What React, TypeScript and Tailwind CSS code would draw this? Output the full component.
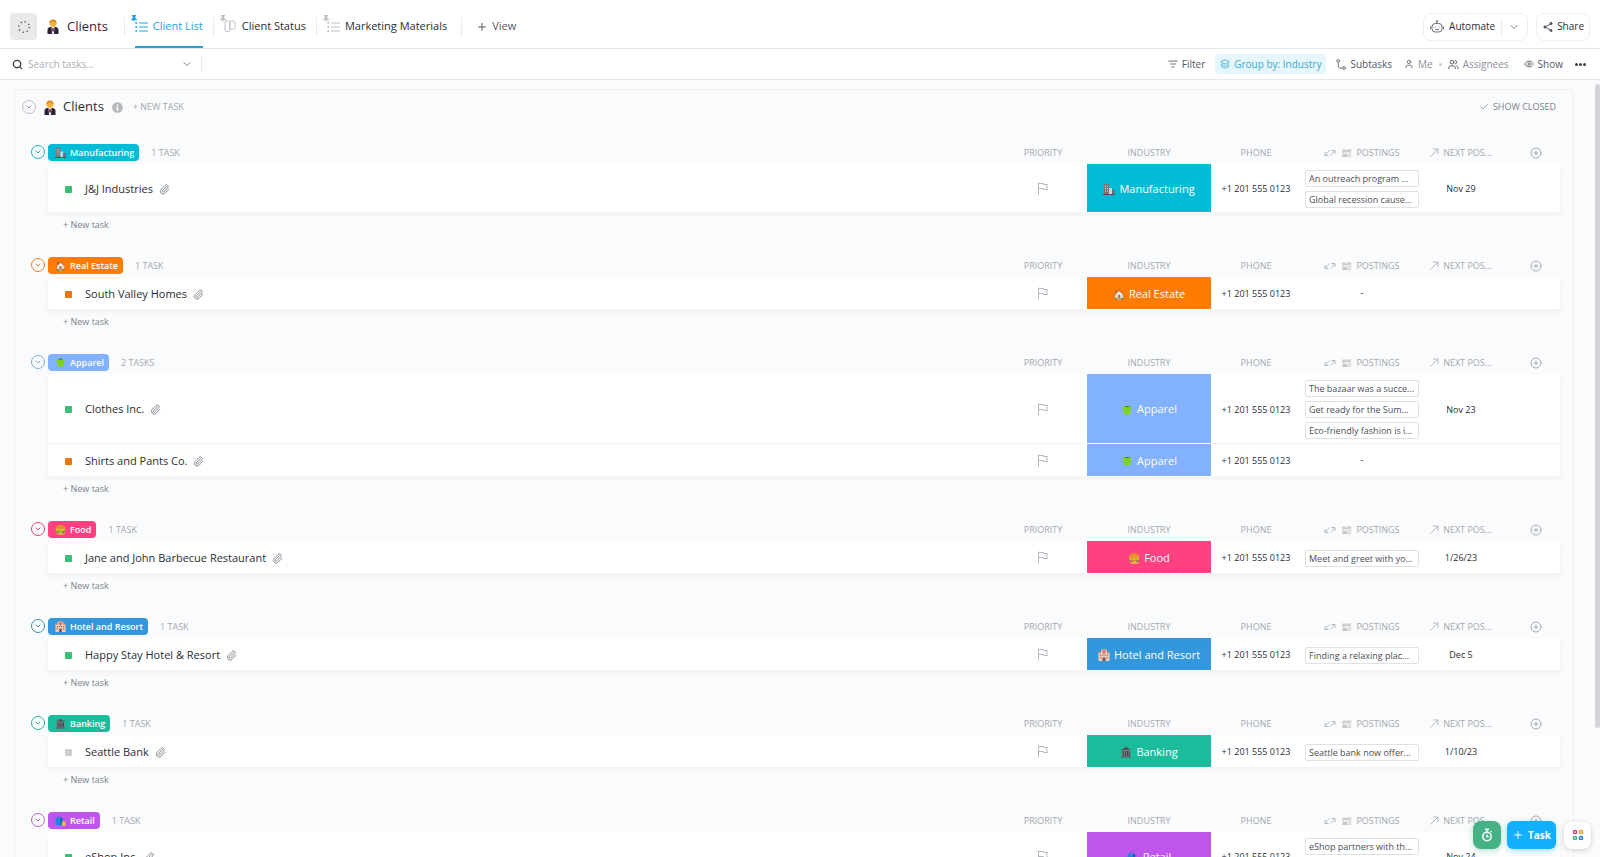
import type { ReactNode } from 'react';
import {
  Check,
  ChevronDown,
  CirclePlus,
  Eye,
  Layers,
  ListFilter,
  Paperclip,
  Plus,
  Search,
  User,
  Users,
} from 'lucide-react';
import { IoMdShare } from 'react-icons/io';

interface Task {
  name: string;
  status: string;
  postings: string[];
  next?: string;
}

interface Group {
  name: string;
  icon: ReactNode;
  bg: string;
  text: string;
  tasks: Task[];
}

const OPEN = 'bg-[#36c174]';
const HOLD = 'bg-[#e8780c]';
const NONE = 'bg-[#cfcfcf]';

function PersonIcon() {
  return (
    <svg viewBox="0 0 12 15" className="h-[15px] w-3 shrink-0" aria-hidden="true">
      <path d="M0.5 15v-4c0-2 1.5-3 3-3h5c1.500 0 3 1 3 3v4z" fill="#2f2238" />
      <path d="M4.500 8h3L7 15H5z" fill="#efe9f2" />
      <path d="M5.300 9h1.400l.5 2.500L6 13l-1.200-1.500z" fill="#7a3b4c" />
      <circle cx="6" cy="4.500" r="3.400" fill="#f3b53a" />
      <path d="M2.400 4.500C2 1.500 4 .4 6 .4s4 1.100 3.600 4.100C8.500 3.600 7.600 3 6 3s-2.500.6-3.600 1.500z" fill="#dd9420" />
    </svg>
  );
}

function BuildingsIcon() {
  return (
    <svg viewBox="0 0 12 12" className="size-full" aria-hidden="true">
      <path d="M1 1h5v11H1z" fill="#7d7273" />
      <path d="M6 5h3v7H6z" fill="#b9dce8" />
      <path d="M9 6.500h2.500V12H9z" fill="#6e6a75" />
      <path d="M2 2.500h1v1H2zM4 2.500h1v1H4zM2 5h1v1H2zM4 5h1v1H4zM2 7.500h1v1H2zM4 7.500h1v1H4z" fill="#d5eef4" />
      <path d="M0 11h12v1H0z" fill="#4f4a52" />
    </svg>
  );
}

function ShirtIcon() {
  return (
    <svg viewBox="0 0 12 12" className="size-full" aria-hidden="true">
      <path d="M3.500 2C2 2.500 1.300 3.600 1.500 5l1 1v3.500C3 11 9 11 9.500 9.500V6l1-1c.2-1.400-.5-2.500-2-3z" fill="#7ed321" />
      <path d="M3.600 2h4.800c-.4 1.600-4.400 1.600-4.800 0z" fill="#3c7d1f" />
    </svg>
  );
}

function HotelIcon() {
  return (
    <svg viewBox="0 0 12 12" className="size-full" aria-hidden="true">
      <path d="M3 .5h6V3h2.500v9H.5V3H3z" fill="#f0cdb8" />
      <path d="M3 .5h6v1H3zM.5 3H3v1H.5zM9 3h2.500v1H9z" fill="#b98474" />
      <path d="M6 2.300c1.500-1 2.500.8 0 2.500-2.500-1.700-1.500-3.500 0-2.500z" fill="#e34c5c" />
      <path d="M2 5.500h1.200v1.200H2zM4.300 5.500h1.200v1.200H4.300zM6.500 5.500h1.200v1.200H6.500zM8.800 5.500H10v1.200H8.800zM2 8h1.200v1.200H2zM8.800 8H10v1.200H8.800z" fill="#a0676a" />
      <path d="M4.500 8.500h3V12h-3z" fill="#7d5560" />
    </svg>
  );
}

function BankIcon() {
  return (
    <svg viewBox="0 0 12 12" className="size-full" aria-hidden="true">
      <path d="M6 .8 11 4H1z" fill="#4d5358" />
      <path d="M1.500 4h9v7h-9z" fill="#7b8084" />
      <path d="M2.800 5h1v5h-1zM4.900 5h1v5h-1zM6.900 5h1v5h-1zM8.700 5h1v5h-1z" fill="#3a3f44" />
      <path d="M1 10.500h10v1H1z" fill="#4d5358" />
    </svg>
  );
}

function BagsIcon() {
  return (
    <svg viewBox="0 0 12 12" className="size-full" aria-hidden="true">
      <path d="M2.500 3.500c0-3 4-3 4 0" fill="none" stroke="#1976c5" strokeWidth="1" />
      <path d="M.8 3.200h7.400v7.600H.8z" fill="#1d86dd" />
      <path d="M6 3.200h2.200v7.600H6z" fill="#1363ae" />
      <path d="M7.500 7h4v5h-4z" fill="#f2b632" />
    </svg>
  );
}

const groups: Group[] = [
  {
    name: 'Manufacturing',
    icon: <BuildingsIcon />,
    bg: 'bg-[#04bbd5]',
    text: 'text-[#1fb3c8]',
    tasks: [
      {
        name: 'J&J Industries',
        status: OPEN,
        postings: ['An outreach program ...', 'Global recession cause...'],
        next: 'Nov 29',
      },
    ],
  },
  {
    name: 'Real Estate',
    icon: '🏠',
    bg: 'bg-[#ff7b02]',
    text: 'text-[#e8812b]',
    tasks: [{ name: 'South Valley Homes', status: HOLD, postings: [] }],
  },
  {
    name: 'Apparel',
    icon: <ShirtIcon />,
    bg: 'bg-[#81b1ff]',
    text: 'text-[#81a9e0]',
    tasks: [
      {
        name: 'Clothes Inc.',
        status: OPEN,
        postings: ['The bazaar was a succe...', 'Get ready for the Sum...', 'Eco-friendly fashion is i...'],
        next: 'Nov 23',
      },
      { name: 'Shirts and Pants Co.', status: HOLD, postings: [] },
    ],
  },
  {
    name: 'Food',
    icon: '🍔',
    bg: 'bg-[#ff4081]',
    text: 'text-[#e0407a]',
    tasks: [
      {
        name: 'Jane and John Barbecue Restaurant',
        status: OPEN,
        postings: ['Meet and greet with yo...'],
        next: '1/26/23',
      },
    ],
  },
  {
    name: 'Hotel and Resort',
    icon: <HotelIcon />,
    bg: 'bg-[#3397dd]',
    text: 'text-[#3a93b8]',
    tasks: [
      {
        name: 'Happy Stay Hotel & Resort',
        status: OPEN,
        postings: ['Finding a relaxing plac...'],
        next: 'Dec 5',
      },
    ],
  },
  {
    name: 'Banking',
    icon: <BankIcon />,
    bg: 'bg-[#1bbc9c]',
    text: 'text-[#2fae94]',
    tasks: [
      { name: 'Seattle Bank', status: NONE, postings: ['Seattle bank now offer...'], next: '1/10/23' },
    ],
  },
  {
    name: 'Retail',
    icon: <BagsIcon />,
    bg: 'bg-[#bf55ec]',
    text: 'text-[#b565cf]',
    tasks: [
      {
        name: 'eShop Inc.',
        status: OPEN,
        postings: ['eShop partners with th...', 'Holiday sale breaks re...'],
        next: 'Nov 24',
      },
    ],
  },
];

function PinIcon({ className }: { className: string }) {
  return (
    <svg viewBox="0 0 6 8" className={className} fill="currentColor" aria-hidden="true">
      <path d="M1 0h4v.8l-.6.4v2L6 4.500v.7H3.500L3 8l-.5-2.800H0v-.7l1.600-1.300v-2L1 .8z" />
    </svg>
  );
}

function ListIcon() {
  return (
    <svg viewBox="0 0 13 12" className="h-3 w-[13px]" fill="currentColor" aria-hidden="true">
      <circle cx="1.200" cy="2" r="1" />
      <circle cx="1.200" cy="6" r="1" />
      <circle cx="1.200" cy="10" r="1" />
      <path d="M4 1.500h9v1H4zM4 5.500h9v1H4zM4 9.500h9v1H4z" />
    </svg>
  );
}

function BoardIcon() {
  return (
    <svg viewBox="0 0 12 13" className="h-[13px] w-3" fill="none" stroke="currentColor" aria-hidden="true">
      <rect x="1" y="1" width="5" height="10.500" rx="1.500" />
      <rect x="6" y="1" width="5" height="8" rx="1.500" />
    </svg>
  );
}

function RobotIcon() {
  return (
    <svg viewBox="0 0 14 13" className="h-[13px] w-3.5" fill="none" stroke="#6b7078" aria-hidden="true">
      <circle cx="7" cy="1.200" r=".7" />
      <path d="M7 2v1.500" />
      <rect x="2" y="3.500" width="10" height="8.500" rx="3.200" />
      <path d="M.7 6v3.500M13.300 6v3.500M4.800 8.800c1 1.300 3.400 1.300 4.400 0" />
      <path d="M5 6.500v.8M9 6.500v.8" />
    </svg>
  );
}

function SubtaskIcon() {
  return (
    <svg viewBox="0 0 10 11" className="h-[11px] w-2.5" fill="none" stroke="#6b7078" aria-hidden="true">
      <circle cx="2.200" cy="2" r="1.400" />
      <circle cx="8" cy="9" r="1.400" />
      <path d="M2.200 3.400V7c0 1.400.6 2 2 2h2.400" />
    </svg>
  );
}

function FlagIcon() {
  return (
    <svg viewBox="0 0 12 13" className="h-[13px] w-3" fill="none" stroke="#b5b9c0" aria-hidden="true">
      <path d="M1.500 12.500v-12M1.500 1.500h5v1h4l-1 2.500 1 2.500h-4v-1h-5" />
    </svg>
  );
}

function InfoIcon() {
  return (
    <svg viewBox="0 0 12 12" className="ml-2 size-[11px]" aria-hidden="true">
      <circle cx="6" cy="6" r="5.800" fill="#b5b8bd" />
      <path d="M5.200 2.500h1.600v1.500H5.200zM4.700 5h2.100v3.400h.7v1H4.600v-1h.6V6h-.5z" fill="#fff" />
    </svg>
  );
}

function RelationIcon() {
  return (
    <svg viewBox="0 0 12 10" className="h-2.5 w-3" fill="none" stroke="#b3b8c0" aria-hidden="true">
      <path d="M5.500 2.500 1.500 7M1 4v3.500h3.500M6.500 7.500l4-4.500M7.500 2.500H11V6" />
    </svg>
  );
}

function RollupIcon() {
  return (
    <svg viewBox="0 0 9 9" className="size-[9px]" fill="none" stroke="#b3b8c0" aria-hidden="true">
      <path d="M.5 8.500l7.500-7.500M3 1h5v5" />
    </svg>
  );
}

function TimerIcon() {
  return (
    <svg viewBox="0 0 12 14" className="h-3.5 w-3" fill="none" stroke="#fff" strokeWidth="1.500" aria-hidden="true">
      <circle cx="6" cy="8.500" r="4.200" />
      <path d="M4 1.200h4M6 1.200v2.500M9.500 4l1-1M6 6.500v2.200h1.800" />
    </svg>
  );
}

function Divider() {
  return <span className="h-5 w-px bg-[#e9ebf0]" />;
}

function ViewTab({ label, icon, active }: { label: string; icon: ReactNode; active?: boolean }) {
  return (
    <a
      href="#"
      className={
        active
          ? 'relative flex h-full items-center gap-1 text-[#1fa3dd]'
          : 'relative flex h-full items-center gap-1 text-[#2a2e34]'
      }
    >
      <span className={active ? 'flex w-3.5' : 'flex w-3.5 text-[#bcc0c6]'}>{icon}</span>
      <PinIcon
        className={
          active
            ? 'absolute -left-1 top-2.5 h-2 w-1.5 text-[#1fa3dd]'
            : 'absolute -left-1 top-2.5 h-2 w-1.5 text-[#bcc0c6]'
        }
      />
      {label}
      {active && <span className="absolute inset-x-0 bottom-0 h-0.5 bg-[#1fa3dd]" />}
    </a>
  );
}

function Header() {
  return (
    <header className="flex h-[49px] shrink-0 items-center justify-between border-b border-[#e4e6e9] pl-2.5 pr-2.5 pt-[5px] text-[11px]">
      <div className="flex h-full items-center">
        <button type="button" aria-label="Loading" className="flex size-[27px] items-center justify-center rounded bg-[#e9e9e9]">
          <svg viewBox="0 0 14 14" className="size-3.5" aria-hidden="true">
            <circle cx="7" cy="7" r="5.300" fill="none" stroke="#555" strokeWidth="1.400" strokeDasharray="1.300 2.860" />
          </svg>
        </button>
        <h1 className="ml-2.5 mr-4 flex items-center gap-2 text-[13px] font-medium text-[#2a2e34]">
          <PersonIcon />
          Clients
        </h1>
        <nav className="flex h-full items-center gap-2.5">
          <Divider />
          <ViewTab label="Client List" active icon={<ListIcon />} />
          <Divider />
          <ViewTab label="Client Status" icon={<BoardIcon />} />
          <Divider />
          <ViewTab label="Marketing Materials" icon={<ListIcon />} />
        </nav>
        <span className="mx-3.5 flex">
          <Divider />
        </span>
        <button type="button" className="flex items-center gap-1 text-[#54585f]">
          <Plus className="size-3" />
          View
        </button>
      </div>
      <div className="flex items-center gap-2 text-[10px] text-[#2a2e34]">
        <div className="flex h-7 items-center rounded-lg border border-[#eceef1] pl-1.5 pr-[7px]">
          <button type="button" className="flex items-center gap-[5px]">
            <RobotIcon />
            Automate
          </button>
          <span className="mx-1.5 h-4 w-px bg-[#e9ebf0]" />
          <button type="button" aria-label="Automation options">
            <ChevronDown className="size-3 text-[#7c828d]" />
          </button>
        </div>
        <button type="button" className="flex h-7 items-center gap-[3px] rounded-lg border border-[#eceef1] px-[5px]">
          <IoMdShare className="size-3 text-[#54585f]" />
          Share
        </button>
      </div>
    </header>
  );
}

function Toolbar() {
  return (
    <div className="flex h-[31px] shrink-0 items-center justify-between border-b border-[#e4e6e9] pl-3 pr-3.5 text-[10px] text-[#54585f]">
      <div className="flex items-center">
        <Search className="size-[11px] text-[#3c4046]" strokeWidth={3} />
        <input
          type="text"
          aria-label="Search tasks"
          placeholder="Search tasks..."
          className="ml-[5px] w-[153px] bg-transparent outline-none placeholder:text-[#a9adb4]"
        />
        <button type="button" aria-label="Search options">
          <ChevronDown className="size-3 text-[#7c828d]" />
        </button>
        <span className="ml-2 h-4 w-px bg-[#e9ebf0]" />
      </div>
      <div className="flex items-center">
        <button type="button" className="mr-2.5 flex items-center gap-1">
          <ListFilter className="size-2.5" />
          Filter
        </button>
        <button type="button" className="mr-2.5 flex h-5 items-center gap-1 rounded bg-[#e5f7fd] px-[5px] text-[#3fa9c9]">
          <Layers className="size-2.5" />
          Group by: Industry
        </button>
        <button type="button" className="mr-3 flex items-center gap-1">
          <SubtaskIcon />
          Subtasks
        </button>
        <button type="button" className="flex items-center gap-1 text-[#8a8f98]">
          <User className="size-2.5 text-[#54585f]" />
          Me
        </button>
        <span className="mx-1.5 size-[3px] rounded-full bg-[#c9ccd1]" />
        <button type="button" className="mr-[15px] flex items-center gap-1 text-[#8a8f98]">
          <Users className="size-[11px] text-[#54585f]" />
          Assignees
        </button>
        <button type="button" className="mr-3 flex items-center gap-1">
          <Eye className="size-2.5" />
          Show
        </button>
        <button type="button" aria-label="More options" className="flex gap-px">
          <span className="size-[3px] rounded-full bg-[#3c4046]" />
          <span className="size-[3px] rounded-full bg-[#3c4046]" />
          <span className="size-[3px] rounded-full bg-[#3c4046]" />
        </button>
      </div>
    </div>
  );
}

function TaskRow({ task, group }: { task: Task; group: Group }) {
  return (
    <tr className="h-[33px] text-center text-[9px] text-[#2a2e34]">
      <td className="border-b border-[#f3f4f6] bg-white pl-[17px] pt-0.5 text-left">
        <div className="flex items-center">
          <span className={'mr-[13px] size-[7px] rounded-[1px] ' + task.status} />
          <a href="#" className="text-[11px]">
            {task.name}
          </a>
          <Paperclip className="ml-1.5 size-[11px] text-[#7c828d]" />
        </div>
      </td>
      <td className="border-b border-[#f3f4f6] bg-white">
        <button type="button" aria-label="Set priority" className="align-middle">
          <FlagIcon />
        </button>
      </td>
      <td className={'border-b border-white/80 bg-clip-padding pt-0.5 text-white ' + group.bg}>
        <div className="flex items-center justify-center gap-1 text-[11px] font-medium">
          <span className="flex size-3 items-center justify-center text-[10px]">{group.icon}</span>
          {group.name}
        </div>
      </td>
      <td className="border-b border-[#f3f4f6] bg-white pt-0.5">+1 201 555 0123</td>
      <td className="border-b border-[#f3f4f6] bg-white px-1">
        {task.postings.length ? (
          <div className="flex flex-col gap-1 pb-1 pt-1.5 text-left text-[#4a4e55]">
            {task.postings.map((posting) => (
              <a
                key={posting}
                href="#"
                className="h-[17px] overflow-hidden whitespace-nowrap rounded-[2px] border border-[#dfe1e5] pl-[3px] leading-[15px]"
              >
                {posting}
              </a>
            ))}
          </div>
        ) : (
          '-'
        )}
      </td>
      <td className="border-b border-[#f3f4f6] bg-white pt-0.5">{task.next}</td>
      <td className="border-b border-[#f3f4f6] bg-white" />
    </tr>
  );
}

function GroupSection({ group }: { group: Group }) {
  const count = group.tasks.length;

  return (
    <section className="flex items-start gap-[3px] pl-4 pr-[13px]">
      <button
        type="button"
        aria-label={'Collapse ' + group.name}
        className={'mt-px flex size-3.5 shrink-0 items-center justify-center rounded-full border border-current ' + group.text}
      >
        <ChevronDown className="size-2" strokeWidth={3} />
      </button>
      <div className="min-w-0 flex-1">
        <table className="w-full table-fixed border-separate border-spacing-0">
          <thead>
            <tr className="h-5 text-[9px] text-[#a3a8b2] *:p-0 *:pb-[3px] *:align-middle *:font-medium">
              <th scope="col">
                <div className="flex items-center gap-3">
                  <span
                    className={
                      'flex h-[17px] items-center gap-1 rounded pl-[7px] pr-[5px] font-semibold text-white ' + group.bg
                    }
                  >
                    <span className="flex size-[11px] items-center justify-center">{group.icon}</span>
                    {group.name}
                  </span>
                  {count} {count === 1 ? 'TASK' : 'TASKS'}
                </div>
              </th>
              <th scope="col" className="w-[88px]">
                PRIORITY
              </th>
              <th scope="col" className="w-[124px]">
                INDUSTRY
              </th>
              <th scope="col" className="w-[90px]">
                PHONE
              </th>
              <th scope="col" className="w-[122px]">
                <span className="flex items-center justify-center">
                  <RelationIcon />
                  <span className="ml-[5px] mr-1 opacity-75 grayscale">📰</span>
                  POSTINGS
                </span>
              </th>
              <th scope="col" className="w-[76px]">
                <span className="flex items-center justify-center gap-1">
                  <RollupIcon />
                  NEXT POS...
                </span>
              </th>
              <th scope="col" className="w-[61px]">
                <button type="button" aria-label="Add column" className="ml-3 align-middle">
                  <CirclePlus className="size-3" />
                </button>
              </th>
            </tr>
          </thead>
          <tbody className="shadow-[0_2px_4px_rgba(0,0,0,0.04)]">
            {group.tasks.map((task) => (
              <TaskRow key={task.name} task={task} group={group} />
            ))}
          </tbody>
        </table>
        <button type="button" className="mb-5 ml-[15px] block h-6 text-[9px] text-[#7c828d]">
          + New task
        </button>
      </div>
    </section>
  );
}

export default function App() {
  return (
    <div className="relative flex h-screen flex-col overflow-hidden bg-white font-['Open_Sans',sans-serif]">
      <Header />
      <Toolbar />
      <main className="flex min-h-0 flex-1 bg-[#fafbfc]">
        <div className="min-w-0 flex-1 overflow-y-auto pl-3.5 pr-[21px] pt-[9px] [scrollbar-width:none]">
          <div className="rounded border border-[#f0f1f4]">
            <div className="mb-5 flex h-[34px] items-center justify-between pl-[7px] pr-[17px] text-[9px]">
              <div className="flex items-center">
                <button
                  type="button"
                  aria-label="Collapse list"
                  className="flex size-3.5 items-center justify-center rounded-full border border-[#b9bdc4] text-[#9a9fa8]"
                >
                  <ChevronDown className="size-2" strokeWidth={3} />
                </button>
                <h2 className="ml-2 flex items-center gap-[7px] text-[13px] font-medium text-[#2a2e34]">
                  <PersonIcon />
                  Clients
                </h2>
                <InfoIcon />
                <button type="button" className="ml-2.5 text-[#a3a8b2]">
                  + NEW TASK
                </button>
              </div>
              <button type="button" className="flex items-center gap-1 text-[#7c828d]">
                <Check className="size-2.5" />
                SHOW CLOSED
              </button>
            </div>
            {groups.map((group) => (
              <GroupSection key={group.name} group={group} />
            ))}
          </div>
        </div>
        <div className="w-[5px] shrink-0 pt-1">
          <div className="h-5/6 rounded-full bg-[#d3d5d8]" />
        </div>
      </main>
      <div className="absolute bottom-2 right-[9px] flex items-center gap-1.5">
        <button
          type="button"
          aria-label="Start timer"
          className="flex size-7 items-center justify-center rounded-lg bg-[#45b185] shadow-[0_2px_6px_rgba(69,177,133,0.4)]"
        >
          <TimerIcon />
        </button>
        <button
          type="button"
          className="flex h-7 items-center gap-1 rounded-md bg-[#11affd] px-[5px] text-[10px] font-bold text-white shadow-[0_2px_6px_rgba(17,175,253,0.4)]"
        >
          <Plus className="size-3" />
          Task
        </button>
        <button
          type="button"
          aria-label="Quick actions"
          className="ml-0.5 flex size-[27px] items-center justify-center rounded-lg bg-white shadow-[0_1px_5px_rgba(0,0,0,0.18)]"
        >
          <svg viewBox="0 0 12 12" className="size-3" fill="none" strokeWidth="1.500" aria-hidden="true">
            <circle cx="3" cy="3" r="1.600" stroke="#d6417b" />
            <circle cx="9" cy="3" r="1.600" stroke="#e2a32c" />
            <circle cx="3" cy="9" r="1.600" stroke="#3cb07c" />
            <circle cx="9" cy="9" r="1.600" stroke="#2e7fd2" />
          </svg>
        </button>
      </div>
    </div>
  );
}
